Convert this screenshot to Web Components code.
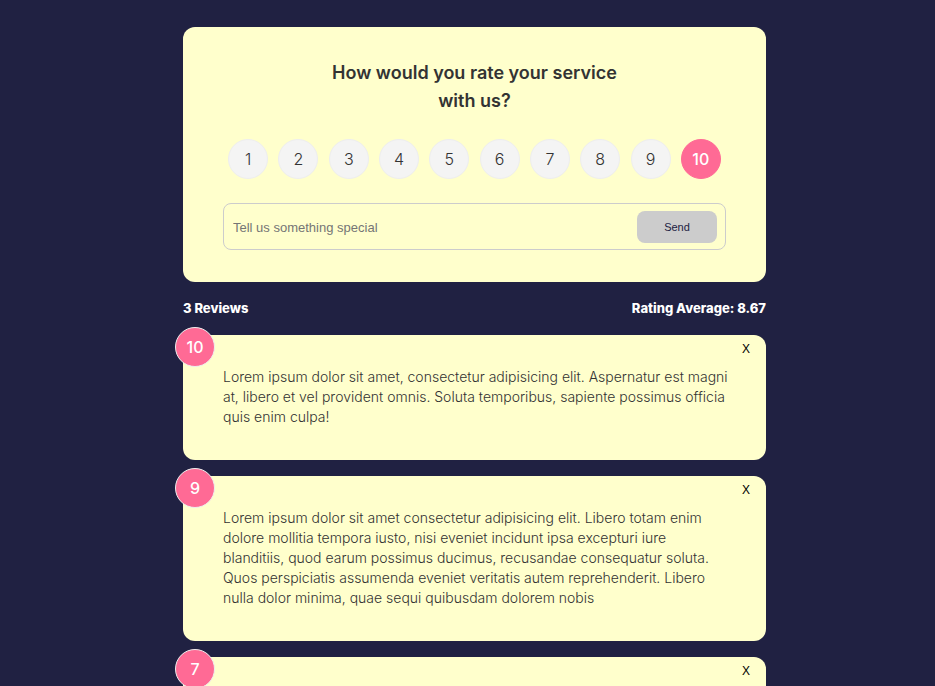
<!DOCTYPE html>
<html lang="en">
<head>
<meta charset="utf-8">
<meta name="viewport" content="width=device-width, initial-scale=1">
<title>Feedback</title>
<style>
:root { --navy: #202142; --cream: #ffffcc; --pink: #ff6a95; --ink: #333333; --grey: #cccccc; }
body { margin: 0; background: var(--navy); font-family: Inter, "Open Sans", sans-serif; color: var(--ink); }
</style>
</head>
<body>
<feedback-app></feedback-app>
<script>
const define = (name, html, setup) => {
  const template = document.createElement('template');
  template.innerHTML = '<style>*{box-sizing:border-box}</style>' + html;
  customElements.define(name, class extends HTMLElement {
    constructor() {
      super();
      this.attachShadow({ mode: 'open' }).append(template.content.cloneNode(true));
    }
    connectedCallback() { if (setup) setup(this, this.shadowRoot); }
  });
};

define('ui-card', `
<style>
:host { display: block; position: relative; background: var(--cream); border-radius: 12px; padding: 32px 40px; }
</style>
<slot></slot>`);

define('rating-select', `
<style>
:host { display: block; }
fieldset { display: flex; justify-content: space-around; border: 0; margin: 0; padding: 0; min-width: 0; }
label { display: grid; place-items: center; width: 40px; height: 40px; border: 1px solid #eeeeee; border-radius: 50%; background: #f4f4f4; font-size: 16px; font-weight: 300; cursor: pointer; }
input { appearance: none; grid-area: 1 / 1; width: 38px; height: 38px; margin: 0; border-radius: 50%; cursor: pointer; }
span { grid-area: 1 / 1; }
label:has(:checked) { background: var(--pink); border-color: var(--pink); color: #ffffff; font-weight: 500; }
</style>
<fieldset aria-label="Rating"></fieldset>`, (host, root) => {
  root.querySelector('fieldset').innerHTML = Array.from({ length: 10 }, (_, i) =>
    `<label><input type="radio" name="rating" value="${i + 1}"${i === 9 ? ' checked' : ''}><span>${i + 1}</span></label>`).join('');
});

define('feedback-form', `
<style>
:host { display: block; }
form { display: grid; gap: 24px; }
h2 { margin: 0 auto; max-width: 320px; text-align: center; font-size: 18px; line-height: 28px; font-weight: 600; }
.field { display: flex; align-items: center; border: 1px solid var(--grey); border-radius: 8px; padding: 7px 8px 6px; }
input { flex: 1; min-width: 0; height: 32px; border: 0; padding: 0 1px; background: none; outline: none; font: 13px "Liberation Sans", sans-serif; color: var(--ink); }
input::placeholder { color: #757575; }
button { width: 80px; height: 32px; border: 0; border-radius: 8px; background: var(--grey); color: var(--navy); font: 11px "Liberation Sans", sans-serif; }
</style>
<ui-card>
  <form>
    <h2>How would you rate your service with us?</h2>
    <rating-select></rating-select>
    <div class="field">
      <input type="text" placeholder="Tell us something special" aria-label="Review">
      <button type="button">Send</button>
    </div>
  </form>
</ui-card>`);

define('feedback-stats', `
<style>
:host { display: flex; justify-content: space-between; padding: 16px 0 17px; color: #ffffff; font-size: 13px; line-height: 20px; font-weight: 800; }
</style>
<span>3 Reviews</span><span>Rating Average: 8.67</span>`);

define('review-item', `
<style>
:host { display: block; }
ui-card { padding: 32px 36px 33px 40px; }
.badge { position: absolute; top: -8px; left: -8px; display: grid; place-items: center; width: 40px; height: 40px; border: 1px solid #eeeeee; border-radius: 50%; background: var(--pink); color: #ffffff; font-size: 16px; font-weight: 500; }
button { position: absolute; top: 4px; right: 12px; width: 16px; height: 20px; border: 0; padding: 0; background: none; color: #000000; font: 12px "Liberation Sans", sans-serif; cursor: pointer; }
p { margin: 0; font-size: 14px; line-height: 20px; font-weight: 300; }
</style>
<ui-card>
  <div class="badge"></div>
  <button type="button" aria-label="Delete review">X</button>
  <p><slot></slot></p>
</ui-card>`, (host, root) => {
  root.querySelector('.badge').textContent = host.getAttribute('rating');
});

define('feedback-app', `
<style>
:host { display: block; padding: 27px 16px 16px 30px; }
main { max-width: 583px; margin: 0 auto; }
.list { display: grid; gap: 16px; }
</style>
<main>
  <feedback-form></feedback-form>
  <feedback-stats></feedback-stats>
  <div class="list">
    <review-item rating="10">Lorem ipsum dolor sit amet, consectetur adipisicing elit. Aspernatur est magni at, libero et vel provident omnis. Soluta temporibus, sapiente possimus officia quis enim culpa!</review-item>
    <review-item rating="9">Lorem ipsum dolor sit amet consectetur adipisicing elit. Libero totam enim dolore mollitia tempora iusto, nisi eveniet incidunt ipsa excepturi iure blanditiis, quod earum possimus ducimus, recusandae consequatur soluta. Quos perspiciatis assumenda eveniet veritatis autem reprehenderit. Libero nulla dolor minima, quae sequi quibusdam dolorem nobis</review-item>
    <review-item rating="7"></review-item>
  </div>
</main>`);
</script>
</body>
</html>
